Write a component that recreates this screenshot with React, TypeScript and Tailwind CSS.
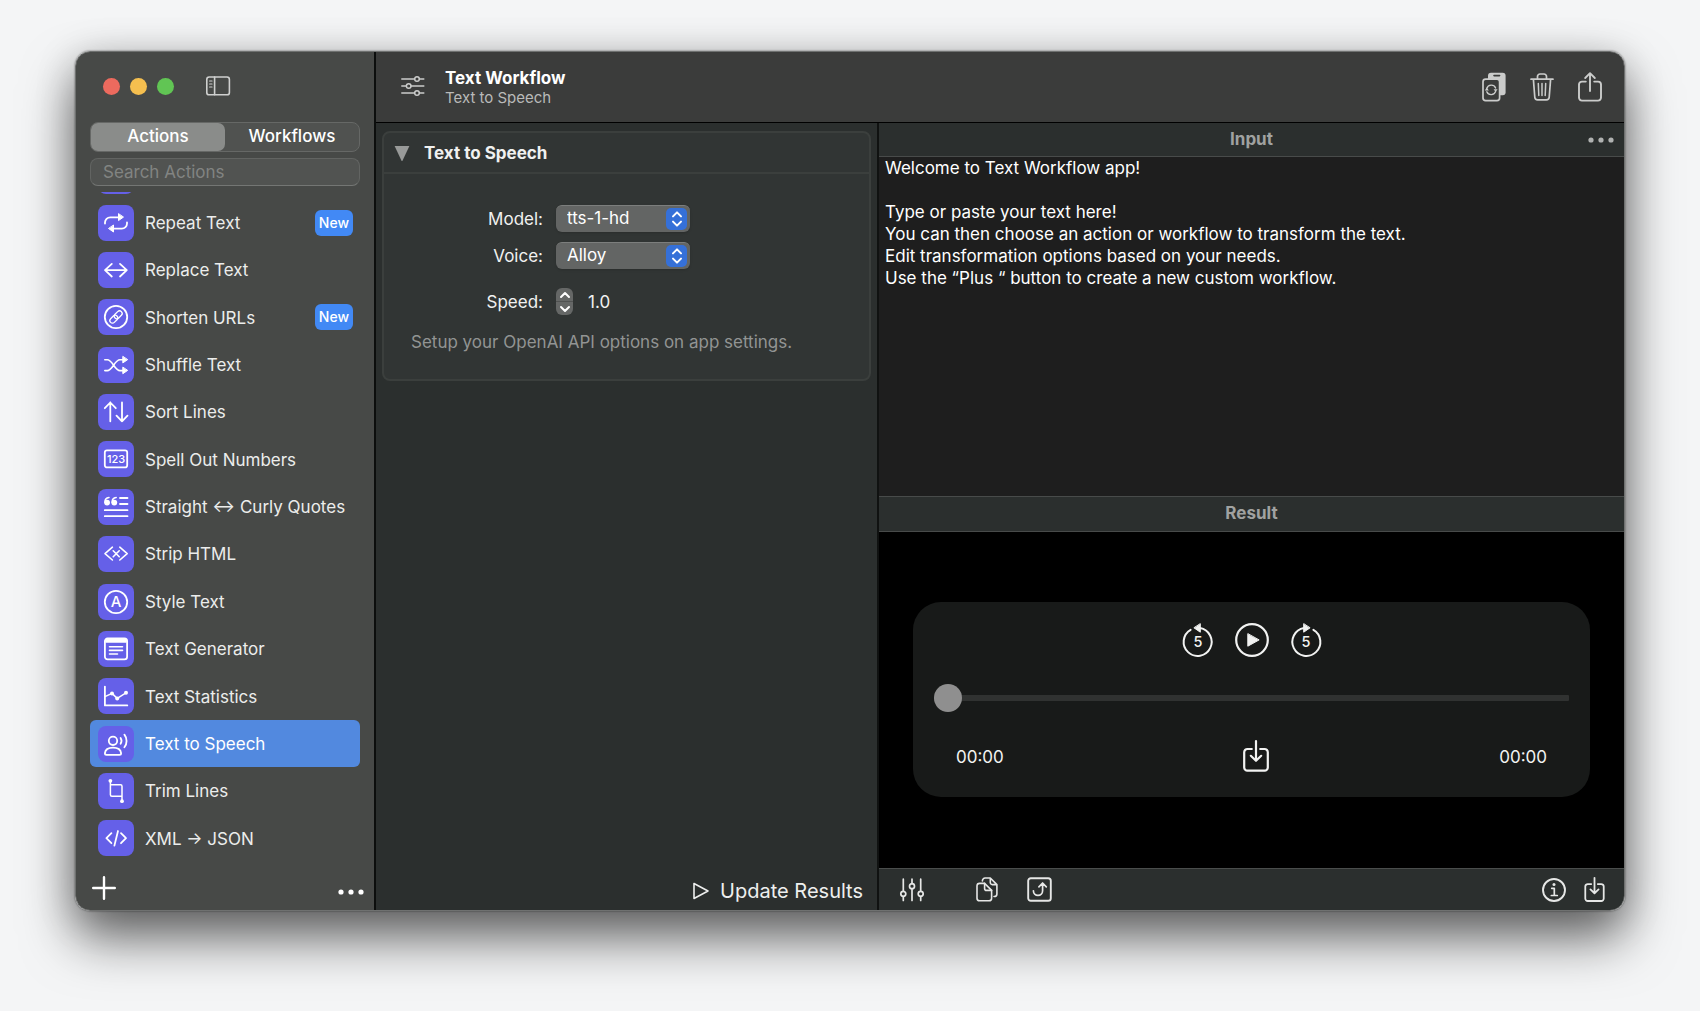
import React, { useState } from 'react';
import clsx from 'clsx';

interface IconProps {
  children: React.ReactNode;
  className?: string;
  viewBox?: string;
  strokeWidth?: number;
}

function Icon({ children, className = 'size-6', viewBox = '0 0 24 24', strokeWidth = 1.8 }: IconProps) {
  return (
    <svg
      className={clsx('shrink-0 overflow-visible', className)}
      viewBox={viewBox}
      fill="none"
      stroke="currentColor"
      strokeWidth={strokeWidth}
      strokeLinecap="round"
      strokeLinejoin="round"
      aria-hidden="true"
    >
      {children}
    </svg>
  );
}

interface Action {
  name: string;
  isNew?: boolean;
  icon: React.ReactNode;
}

const actions: Action[] = [
  {
    name: 'Repeat Text',
    isNew: true,
    icon: (
      <>
        <path d="M1 12.6v-1.1a5.2 5.2 0 0 1 5.2-5.2H14M23 11.4v1.1a5.2 5.2 0 0 1-5.2 5.2H10" />
        <path d="M14.5 3v6.6l4.7-3.3zM9.5 14.4V21l-4.7-3.3z" fill="currentColor" strokeWidth="1" />
      </>
    ),
  },
  {
    name: 'Replace Text',
    icon: <path d="M7.8 5.9 1 12.2l6.8 6.3M16 5.9l6.8 6.3-6.8 6.3M1.2 12.2h21.4" />,
  },
  {
    name: 'Shorten URLs',
    isNew: true,
    icon: (
      <>
        <circle cx="12" cy="12" r="11.2" />
        <g transform="rotate(-45 12 12)" strokeWidth="1.3">
          <rect x="4.4" y="9.4" width="9" height="5.2" rx="2.6" />
          <rect x="10.6" y="9.4" width="9" height="5.2" rx="2.6" />
        </g>
      </>
    ),
  },
  {
    name: 'Shuffle Text',
    icon: (
      <>
        <path d="M.8 6.8h2.4c5.4 0 7.4 10.8 12.8 10.8h2.6M.8 17.6h2.4c5.4 0 7.4-10.8 12.8-10.8h2.6" strokeWidth="1.6" />
        <path d="M18.8 3.7v6.2l4.6-3.1zM18.8 14.5v6.2l4.6-3.1z" fill="currentColor" strokeWidth="1" />
      </>
    ),
  },
  {
    name: 'Sort Lines',
    icon: <path d="M6.3 2.5v18.8M.8 8.2l5.5-5.7 5.5 5.7M18 2.5v18.8M12.5 15.6l5.5 5.7 5.5-5.7" />,
  },
  {
    name: 'Spell Out Numbers',
    icon: (
      <>
        <rect x=".8" y="3.4" width="22.4" height="17" rx="2.2" />
        <text x="12" y="15.8" fontSize="11" fontWeight="500" textAnchor="middle" fill="currentColor" stroke="none">
          123
        </text>
      </>
    ),
  },
  {
    name: 'Straight ↔ Curly Quotes',
    icon: (
      <>
        <path d="M16 3h7.5M16 9h7.5M.8 15.2h22.7M.8 21.2h22.7" />
        <g fill="currentColor" stroke="none">
          <circle cx="3.1" cy="7.6" r="2.9" />
          <circle cx="10.3" cy="7.6" r="2.9" />
        </g>
        <path d="M1 7.4C.8 4.8 2.4 2.9 5 2.6M8.2 7.4C8 4.8 9.6 2.9 12.2 2.6" strokeWidth="1.5" />
      </>
    ),
  },
  {
    name: 'Strip HTML',
    icon: <path d="M8.4 5.2 1 11.6l7.4 6.4M15.8 5.2l7.4 6.4-7.4 6.4M9.2 8.8l6 6M15.2 8.8l-6 6" strokeWidth="1.6" />,
  },
  {
    name: 'Style Text',
    icon: (
      <>
        <circle cx="12" cy="12" r="11.2" />
        <text x="12" y="17.3" fontSize="15" fontWeight="500" textAnchor="middle" fill="currentColor" stroke="none">
          A
        </text>
      </>
    ),
  },
  {
    name: 'Text Generator',
    icon: (
      <>
        <rect x=".9" y="1.5" width="22.2" height="20.8" rx="2.6" />
        <path d="M2 2.6h20V5H2z" fill="currentColor" strokeWidth="1.6" />
        <path d="M5.5 9.8h13M5.5 13.4h13M5.5 17h8" strokeWidth="1.6" />
      </>
    ),
  },
  {
    name: 'Text Statistics',
    icon: (
      <>
        <path d="M.9 2.6v18.8h22.4" />
        <path d="m1 12.6 7-3.2 5.2 5 8.8-5.6" strokeWidth="1.5" />
        <g fill="currentColor" stroke="none">
          <circle cx="8" cy="9.4" r="2" />
          <circle cx="13.2" cy="14.4" r="2" />
          <circle cx="22" cy="8.8" r="2" />
        </g>
      </>
    ),
  },
  {
    name: 'Text to Speech',
    icon: (
      <>
        <circle cx="9" cy="8.8" r="4.2" />
        <path d="M.9 21.2c.4-3.6 3.8-5.6 8.1-5.6s7.7 2 8.1 5.6c0 1-.4 1.6-1.6 1.6h-13c-1.2 0-1.6-.6-1.6-1.6z" />
        <path d="M16.6 6c1.1 1.7 1.1 4 0 5.7M20.4 2.6c2.9 3.6 2.9 9 0 12.6" />
      </>
    ),
  },
  {
    name: 'Trim Lines',
    icon: (
      <>
        <path d="M6.4 2v13.8q0 1.5 1.5 1.5H18M6.4 5.8h10.2Q18 5.8 18 7.3V22" strokeWidth="1.5" />
        <g fill="currentColor" stroke="none">
          <circle cx="6.4" cy="1.8" r="1.9" />
          <circle cx="18" cy="22.2" r="1.9" />
        </g>
      </>
    ),
  },
  {
    name: 'XML → JSON',
    icon: <path d="m7.4 7.2-5 5 5 5M17 7.2l5 5-5 5M14 5l-3.6 14.6" />,
  },
];

function ActionTile({ children }: { children?: React.ReactNode }) {
  return (
    <span className="flex size-9 shrink-0 items-center justify-center rounded-lg bg-[#6560e8] text-white">
      {children}
    </span>
  );
}

function ActionRow({ action, selected, onSelect }: { action: Action; selected: boolean; onSelect: () => void }) {
  return (
    <li className="flex flex-1">
      <button
        onClick={onSelect}
        className={clsx(
          'flex w-full items-center gap-[11px] rounded-md pl-2 pr-[7px] text-left text-[17px] text-[#ecedec]',
          selected && 'bg-[#5289df] text-white',
        )}
      >
        <ActionTile>
          <Icon>{action.icon}</Icon>
        </ActionTile>
        <span className="flex-1 whitespace-nowrap pt-[2px]">{action.name}</span>
        {action.isNew && (
          <span className="rounded-md bg-[#4289f5] px-1 py-[3px] text-sm font-medium text-white">New</span>
        )}
      </button>
    </li>
  );
}

function Dots({ className }: { className: string }) {
  return (
    <svg className={className} viewBox="0 0 26 6" fill="currentColor" aria-hidden="true">
      <circle cx="3" cy="3" r="2.6" />
      <circle cx="13" cy="3" r="2.6" />
      <circle cx="23" cy="3" r="2.6" />
    </svg>
  );
}

function Sidebar() {
  const [selected, setSelected] = useState('Text to Speech');

  return (
    <aside className="flex w-[300px] shrink-0 flex-col border-r-2 border-[#0c0e0d] bg-[#474947] px-[14px]">
      <div className="mb-[2px] flex h-[68px] items-center pl-[13px]">
        <div className="flex gap-[10px]">
          <button aria-label="Close" className="size-[17px] rounded-full bg-[#ec6a5e]" />
          <button aria-label="Minimize" className="size-[17px] rounded-full bg-[#f5bf4f]" />
          <button aria-label="Zoom" className="size-[17px] rounded-full bg-[#61c554]" />
        </div>
        <button aria-label="Toggle sidebar" className="ml-8 text-[#cfd0cf]">
          <Icon className="h-5 w-6" viewBox="0 0 24 20" strokeWidth={1.6}>
            <rect x=".8" y="1" width="22.6" height="17.8" rx="2.4" />
            <path d="M8.6 1v17.8" />
            <path d="M3.6 5H6M3.6 8H6M3.6 11H6" strokeWidth="1.2" />
          </Icon>
        </button>
      </div>

      <div className="flex h-[30px] rounded-lg border border-[#666866] bg-[#505250] text-[17px] font-medium text-white">
        <button className="flex-1 rounded-[7px] bg-[#8a8c8a]">Actions</button>
        <button className="flex-1">Workflows</button>
      </div>
      <input
        type="search"
        aria-label="Search Actions"
        placeholder="Search Actions"
        className="mt-[6px] h-7 w-full rounded-lg border border-[#626462] border-b-[#747674] bg-[#515351] px-3 text-[17px] text-white outline-none placeholder:text-[#828482]"
      />

      <ul className="mt-[6px] flex flex-1 flex-col overflow-hidden">
        <li className="flex h-[7px] shrink-0 items-end overflow-hidden pb-[5px] pl-2" aria-hidden="true">
          <ActionTile />
        </li>
        {actions.map((action) => (
          <ActionRow
            key={action.name}
            action={action}
            selected={action.name === selected}
            onSelect={() => setSelected(action.name)}
          />
        ))}
      </ul>

      <div className="-mr-1 flex h-12 items-center justify-between pl-[2px] pt-1 text-white">
        <button aria-label="Add workflow">
          <Icon strokeWidth={2.4}>
            <path d="M12 1.2v21.6M1.2 12h21.6" />
          </Icon>
        </button>
        <button aria-label="More" className="pt-2">
          <Dots className="w-[26px]" />
        </button>
      </div>
    </aside>
  );
}

function SaveIcon({ className, strokeWidth = 2.2 }: { className: string; strokeWidth?: number }) {
  return (
    <Icon className={className} viewBox="0 0 26 32" strokeWidth={strokeWidth}>
      <path d="M8.8 9H4.5a3.2 3.2 0 0 0-3.3 3.2v15.300a3.2 3.2 0 0 0 3.300 3.200h17a3.200 3.200 0 0 0 3.300-3.200V12.200A3.200 3.200 0 0 0 21.500 9h-4.300" />
      <path d="M13 1v19.500M7.800 15.800l5.200 5 5.200-5" />
    </Icon>
  );
}

function Header() {
  return (
    <header className="flex h-[71px] shrink-0 items-center justify-between border-b border-black bg-[#3b3c3b] pl-[25px] pr-[22px] text-[#cbcccb]">
      <div className="flex items-center gap-5">
        <Icon strokeWidth={1.5}>
          <path d="M.8 4h12.7M18.5 4h4.3M.8 11h4.3M10.2 11h12.6M.8 18h12.7M18.5 18h4.3" />
          <circle cx="16" cy="4" r="2.3" />
          <circle cx="7.7" cy="11" r="2.3" />
          <circle cx="16" cy="18" r="2.3" />
        </Icon>
        <div>
          <h1 className="text-[17px] font-bold leading-[21px] text-white">Text Workflow</h1>
          <p className="text-[15px] leading-[18px] text-[#b9bab9]">Text to Speech</p>
        </div>
      </div>

      <div className="flex items-center gap-6">
        <button aria-label="Reuse result">
          <Icon className="h-[30px] w-6" viewBox="0 0 24 30" strokeWidth={1.7}>
            <rect x="6" y=".8" width="17.6" height="22.4" rx="3" fill="currentColor" stroke="none" />
            <path d="M12 3.6h5.6" stroke="#3b3c3b" strokeWidth="1.6" />
            <rect x="1" y="7.2" width="16.6" height="21.4" rx="2.6" fill="#3b3c3b" />
            <path d="M4.8 16.4a4.7 4.7 0 0 1 8.8-.4M13.6 19.400a4.700 4.700 0 0 1-8.800.4" strokeWidth="1.4" />
            <path d="M2.800 18.400h4l-2-2.800zM11.600 17.200h4l-2 2.800z" fill="currentColor" stroke="none" />
          </Icon>
        </button>
        <button aria-label="Clear">
          <Icon className="h-7 w-6" viewBox="0 0 24 28" strokeWidth={1.7}>
            <path d="M1 6.2h22M7.5 6V3.500A2.500 2.500 0 0 1 10 1h4a2.500 2.500 0 0 1 2.500 2.500V6M3.400 6.400l1.400 17.800a2.800 2.800 0 0 0 2.800 2.600h8.800a2.800 2.800 0 0 0 2.800-2.600l1.400-17.800" />
            <path d="m8.3 10.5.5 12M12 10.5v12M15.700 10.500l-.5 12" strokeWidth="1.5" />
          </Icon>
        </button>
        <button aria-label="Share">
          <Icon className="h-[30px] w-6" viewBox="0 0 24 30" strokeWidth={1.9}>
            <path d="M7.8 9.6H4a3 3 0 0 0-3 3v13a3 3 0 0 0 3 3h16a3 3 0 0 0 3-3v-13a3 3 0 0 0-3-3h-3.8" />
            <path d="M12 19V1.500M7.200 6 12 1.200 16.800 6" />
          </Icon>
        </button>
      </div>
    </header>
  );
}

function PopupSelect({ id, options }: { id: string; options: string[] }) {
  return (
    <div className="relative w-[134px]">
      <select
        id={id}
        className="block h-[27px] w-full appearance-none rounded-md border-t border-[#7c7e7d] bg-[#636564] pb-[2px] pl-[11px] text-[17px] leading-[22px] text-white shadow-sm outline-none"
      >
        {options.map((option) => (
          <option key={option}>{option}</option>
        ))}
      </select>
      <span className="pointer-events-none absolute right-[3px] top-[3px] flex h-[22px] w-[21px] items-center justify-center rounded-[5px] bg-[#3570d8] text-white">
        <Icon className="h-4 w-3" viewBox="0 0 12 16" strokeWidth={2}>
          <path d="m2 5.4 4-4 4 4M2 10.600l4 4 4-4" />
        </Icon>
      </span>
    </div>
  );
}

function OptionsPanel() {
  const [speed, setSpeed] = useState(1);

  return (
    <section className="flex w-[503px] shrink-0 flex-col justify-between border-r-2 border-[#101211] bg-[#2b2f2e] px-[6px] pt-2">
      <div className="rounded-lg border-2 border-[#3b3f3d] bg-[#313534]">
        <div className="flex h-[41px] items-center gap-[14px] border-b-2 border-[#3b3f3d] pl-[10px]">
          <button aria-label="Collapse" className="text-[#989a99]">
            <svg className="size-4" viewBox="0 0 16 16" fill="currentColor" aria-hidden="true">
              <path d="M.6 1h14.8L8.600 15.400a.7.7 0 0 1-1.200 0z" />
            </svg>
          </button>
          <h2 className="pt-[2px] text-[17px] font-bold text-[#f0f1f0]">Text to Speech</h2>
        </div>

        <div className="px-[27px] pb-6 pt-[31px] text-[17px] text-[#f0f1f0]">
          <div className="grid grid-cols-[132px_1fr] items-center gap-x-[13px]">
            <label htmlFor="model" className="pt-[2px] text-right">
              Model:
            </label>
            <PopupSelect id="model" options={['tts-1-hd', 'tts-1']} />
            <label htmlFor="voice" className="pt-[11px] text-right">
              Voice:
            </label>
            <div className="pt-[9px]">
              <PopupSelect id="voice" options={['Alloy', 'Echo', 'Fable', 'Onyx', 'Nova', 'Shimmer']} />
            </div>
            <label htmlFor="speed" className="pt-[21px] text-right">
              Speed:
            </label>
            <div className="flex items-center gap-[15px] pt-[19px]">
              <div className="flex h-[27px] w-[17px] flex-col overflow-hidden rounded-md bg-[#656766] text-white">
                <button
                  aria-label="Increase speed"
                  onClick={() => setSpeed(Math.min(4, speed + 0.1))}
                  className="flex flex-1 items-center justify-center border-b border-[#505251]"
                >
                  <Icon className="h-[6px] w-[10px]" viewBox="0 0 10 6" strokeWidth={2}>
                    <path d="m1 5 4-4 4 4" />
                  </Icon>
                </button>
                <button
                  aria-label="Decrease speed"
                  onClick={() => setSpeed(Math.max(0.3, speed - 0.1))}
                  className="flex flex-1 items-center justify-center"
                >
                  <Icon className="h-[6px] w-[10px]" viewBox="0 0 10 6" strokeWidth={2}>
                    <path d="m1 1 4 4 4-4" />
                  </Icon>
                </button>
              </div>
              <output id="speed" className="pt-[2px]">
                {speed.toFixed(1)}
              </output>
            </div>
          </div>
          <p className="mt-[14px] whitespace-nowrap text-[#929493]">Setup your OpenAI API options on app settings.</p>
        </div>
      </div>

      <button className="mb-[5px] mr-2 flex items-center gap-[11px] self-end text-xl text-[#eeefee]">
        <Icon className="h-[18px] w-4" viewBox="0 0 16 18" strokeWidth={1.6}>
          <path d="M1 1.500v15L15 9z" />
        </Icon>
        Update Results
      </button>
    </section>
  );
}

function SkipIcon({ forward }: { forward?: boolean }) {
  return (
    <Icon className="h-[34px] w-[30px]" viewBox="0 0 30 34" strokeWidth={2}>
      <g transform={forward ? 'matrix(-1 0 0 1 30 0)' : undefined}>
        <path d="M17 5.100a14 14 0 1 1-9.400 1.700" />
        <path d="M17.300 1v8.200L11.200 5z" fill="currentColor" strokeWidth="1" />
      </g>
      <text x="15" y="24.2" fontSize="14.5" fontWeight="500" textAnchor="middle" fill="currentColor" stroke="none">
        5
      </text>
    </Icon>
  );
}

function Player() {
  return (
    <div className="w-full rounded-[28px] bg-[#181a19] px-[21px] pb-[25px] pt-[21px] text-[#f2f3f2]">
      <div className="flex items-center justify-center gap-[22px]">
        <button aria-label="Back 5 seconds">
          <SkipIcon />
        </button>
        <button aria-label="Play">
          <Icon className="size-[34px]" viewBox="0 0 34 34" strokeWidth={2.2}>
            <circle cx="17" cy="17" r="15.8" />
            <path d="M12.800 11v12.200l11-6.100z" fill="currentColor" strokeWidth="1" />
          </Icon>
        </button>
        <button aria-label="Forward 5 seconds">
          <SkipIcon forward />
        </button>
      </div>

      <input
        type="range"
        aria-label="Playback position"
        defaultValue={0}
        className="mt-[27px] block h-7 w-full appearance-none bg-transparent [&::-webkit-slider-runnable-track]:h-[6px] [&::-webkit-slider-runnable-track]:rounded-[1px] [&::-webkit-slider-runnable-track]:bg-[#303231] [&::-webkit-slider-thumb]:-mt-[11px] [&::-webkit-slider-thumb]:size-7 [&::-webkit-slider-thumb]:appearance-none [&::-webkit-slider-thumb]:rounded-full [&::-webkit-slider-thumb]:bg-[#8f8f8f]"
      />

      <div className="mt-7 flex items-center justify-between px-[22px] text-[17px]">
        <span className="pt-[2px]">00:00</span>
        <button aria-label="Save audio" className="pl-2">
          <SaveIcon className="h-8 w-[26px]" />
        </button>
        <span className="pt-[2px]">00:00</span>
      </div>
    </div>
  );
}

const welcomeText = `Welcome to Text Workflow app!

Type or paste your text here!
You can then choose an action or workflow to transform the text.
Edit transformation options based on your needs.
Use the “Plus “ button to create a new custom workflow.`;

function Toolbar() {
  return (
    <footer className="flex h-[42px] shrink-0 items-center justify-between border-t border-[#4a4d4c] bg-[#2b2f2e] pl-[21px] pr-[19px] text-[#e6e7e6]">
      <div className="flex items-center">
        <button aria-label="Adjust">
          <Icon strokeWidth={1.7}>
            <path d="M3.300 1.200v12M3.300 18.500v4M12 1.200v4.500M12 10.800v11.700M20.700 1.200v12M20.700 18.500v4" />
            <circle cx="3.3" cy="15.8" r="2.5" />
            <circle cx="12" cy="8.2" r="2.5" />
            <circle cx="20.7" cy="15.8" r="2.5" />
          </Icon>
        </button>
        <button aria-label="Copy result" className="ml-[52px]">
          <Icon className="h-[25px] w-[22px]" viewBox="0 0 22 25" strokeWidth={1.6}>
            <path d="M1 9a2.600 2.600 0 0 1 2.600-2.600h5l7 7v7.800a2.600 2.600 0 0 1-2.600 2.600H3.600A2.600 2.600 0 0 1 1 21.200z" />
            <path d="M8.600 6.400v5a2 2 0 0 0 2 2h5M6.400 4a2.800 2.800 0 0 1 2.700-3h5.200l6.600 6.600v9.300a2.600 2.600 0 0 1-2.600 2.600H18M14.300 1v4.600a2 2 0 0 0 2 2h4.600" />
          </Icon>
        </button>
        <button aria-label="Use result as input" className="ml-[29px]">
          <Icon className="size-[25px]" viewBox="0 0 25 25" strokeWidth={1.9}>
            <rect x="1.2" y="1.2" width="22.6" height="22.6" rx="2.6" />
            <path d="M6.400 13.800a4.600 4.600 0 0 0 9.200 0V6.400M11.900 9.800l3.700-3.800 3.700 3.800" strokeWidth="1.7" />
          </Icon>
        </button>
      </div>
      <div className="flex items-center gap-[18px]">
        <button aria-label="Info">
          <Icon strokeWidth={1.9}>
            <circle cx="12" cy="12" r="11" />
            <path d="M9.700 10.300h2.600v7M9.300 17.500h6" strokeWidth="1.7" />
            <circle cx="12" cy="6.6" r="1.5" fill="currentColor" stroke="none" />
          </Icon>
        </button>
        <button aria-label="Save result">
          <SaveIcon className="h-[25px] w-[21px]" strokeWidth={2.3} />
        </button>
      </div>
    </footer>
  );
}

function Workspace() {
  return (
    <section className="flex min-w-0 flex-1 flex-col">
      <div className="flex min-h-0 flex-1 flex-col">
        <div className="relative flex h-[34px] shrink-0 items-center justify-center border-b border-[#484b4a] bg-[#2b2f2e]">
          <label htmlFor="input-text" className="text-[17px] font-bold text-[#a0a2a1]">
            Input
          </label>
          <button aria-label="Input options" className="absolute right-[10px] text-[#b0b2b1]">
            <Dots className="w-[26px]" />
          </button>
        </div>
        <textarea
          id="input-text"
          defaultValue={welcomeText}
          spellCheck={false}
          className="block w-full flex-1 resize-none bg-[#1e1e1e] px-[6px] text-[17px] leading-[22px] text-white outline-none"
        />
      </div>
      <div className="flex min-h-0 flex-1 flex-col">
        <div className="flex h-[36px] shrink-0 items-center justify-center border-y border-[#484b4a] bg-[#2b2f2e]">
          <h2 className="text-[17px] font-bold text-[#a0a2a1]">Result</h2>
        </div>
        <div className="flex flex-1 items-center bg-black px-[34px]">
          <Player />
        </div>
      </div>
      <Toolbar />
    </section>
  );
}

export default function App() {
  return (
    <div className="flex min-h-screen bg-[#f4f5f6] px-[75px] pb-[100px] pt-[51px] font-['Inter','Liberation_Sans',sans-serif]">
      <main className="flex flex-1 overflow-hidden rounded-[15px] border border-[#6f7170] shadow-[0_0_2px_rgba(0,0,0,0.6),0_28px_52px_rgba(0,0,0,0.55),0_6px_40px_rgba(0,0,0,0.2)]">
        <Sidebar />
        <div className="flex min-w-0 flex-1 flex-col">
          <Header />
          <div className="flex min-h-0 flex-1">
            <OptionsPanel />
            <Workspace />
          </div>
        </div>
      </main>
    </div>
  );
}
